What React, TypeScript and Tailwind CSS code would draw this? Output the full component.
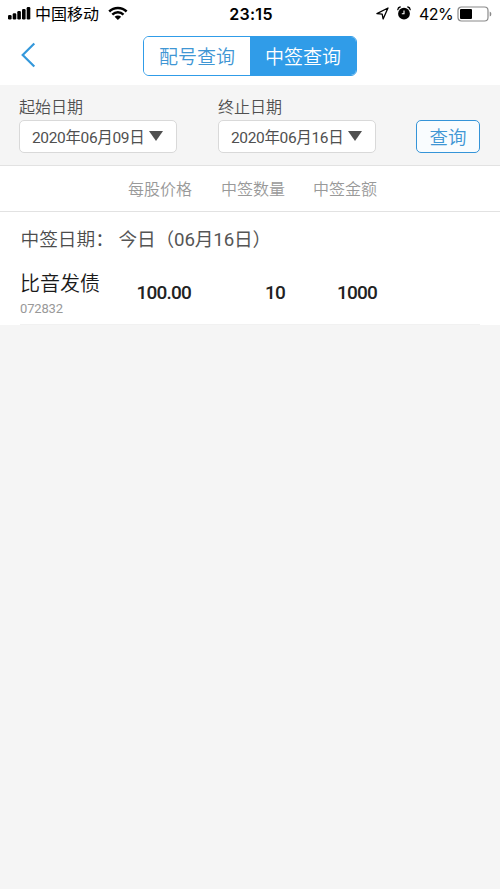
const TABS = ['配号查询', '中签查询'];

const RECORDS = [{ name: '比音发债', code: '072832', price: '100.00', count: '10', amount: '1000' }];

function StatusBar() {
  return (
    <div className="flex h-[27px] items-center pl-2 pr-[8px] text-black">
      <div className="flex flex-1 items-center">
        <svg width="23" height="14" viewBox="0 0 23 14" className="-mt-px shrink-0">
          <rect x="0" y="9" width="3.6" height="4.5" rx="1.2" />
          <rect x="4.7" y="7.2" width="3.6" height="6.3" rx="1.2" />
          <rect x="9.3" y="5" width="3.6" height="8.5" rx="1.2" />
          <rect x="14" y="3" width="3.6" height="10.5" rx="1.2" />
          <rect x="18.7" y="1" width="3.6" height="12.5" rx="1.2" />
        </svg>
        <span className="ml-1 mt-[2px] text-[16px] leading-none">中国移动</span>
        <svg width="20" height="15" viewBox="0 0 20 15" className="ml-[9px] shrink-0">
          <g fill="none" stroke="black" strokeWidth="2.5">
            <path d="M1.2 5.5C6.1.7 13.7.7 18.6 5.5" />
            <path d="M4.3 8.6C7.5 5.6 12.3 5.6 15.5 8.6" />
          </g>
          <path d="M6.6 10.8C8.5 9.2 11.3 9.2 13.2 10.8L9.9 14.1Z" />
        </svg>
      </div>
      <span className="ml-[2px] font-[Inter] text-[16px] font-semibold leading-none tracking-[0.3px]">23:15</span>
      <div className="flex flex-1 items-center justify-end">
        <svg width="13" height="13" viewBox="0 0 13 13" className="shrink-0">
          <path d="M.9 6.6L12 1L7.1 12L6.2 7.1Z" fill="none" stroke="black" strokeWidth="1.3" strokeLinejoin="round" />
        </svg>
        <svg width="14" height="14" viewBox="0 0 14 14" className="-mt-px ml-[8px] shrink-0">
          <circle cx="7" cy="7.7" r="5.9" />
          <path d="M.8 3.7Q1 1.5 3.2 1M13.2 3.7Q13 1.5 10.8 1" fill="none" stroke="black" strokeWidth="1.3" strokeLinecap="round" />
          <path d="M7 4.6V7.8H4.8" fill="none" stroke="white" strokeWidth="1.1" />
        </svg>
        <span className="ml-[8px] font-[Inter] text-[16px] leading-none tracking-[-0.6px]">42%</span>
        <svg width="35" height="16" viewBox="0 0 35 16" className="ml-1 shrink-0">
          <rect x="1" y="1" width="30" height="14" rx="3.5" fill="none" stroke="#8a8a8a" strokeWidth="1.2" />
          <rect x="3" y="3" width="12" height="10" rx="1" />
          <path d="M32.7 5.5Q34.4 6 34.4 8T32.7 10.5Z" fill="#8a8a8a" />
        </svg>
      </div>
    </div>
  );
}

function DateField({ label, value }: { label: string; value: string }) {
  return (
    <div className="w-[158px]">
      <div className="pt-px text-[16px] font-[350] leading-[22px] text-[#505050]">{label}</div>
      <div className="mt-px flex h-[33px] items-center rounded-[5px] border border-[#d9d9d9] bg-white pl-3 text-[#505050]">
        <span className="mt-[5px] whitespace-nowrap text-[15.5px] leading-none tracking-[-0.35px]">{value}</span>
        <svg width="14" height="10" viewBox="0 0 14 10" className="-mt-[2px] ml-[5px] shrink-0">
          <path d="M0 0H14L7 10Z" fill="#505050" />
        </svg>
      </div>
    </div>
  );
}

export default function App() {
  return (
    <div className="min-h-screen w-[500px] bg-[#f5f5f5] font-[Roboto,'Noto_Sans_CJK_SC',sans-serif]">
      <header className="h-[85px] bg-white">
        <StatusBar />
        <div className="flex pl-[21px] pt-[9px]">
          <svg width="15" height="26" viewBox="0 0 15 26" className="mt-[6px]">
            <path d="M13.3 1.5L1.7 13L13.3 24.5" fill="none" stroke="#3498db" strokeWidth="2.2" />
          </svg>
          <div className="ml-[107px] flex h-10 w-[214px] overflow-hidden rounded-[6px] border border-[#309ce8]">
            {TABS.map((tab, i) => (
              <button
                key={tab}
                className={`flex flex-1 items-center justify-center pt-[3px] text-[19px] font-[350] leading-none ${
                  i === 1 ? 'bg-[#309ce8] text-white' : 'bg-white text-[#3f96d4]'
                }`}
              >
                {tab}
              </button>
            ))}
          </div>
        </div>
      </header>

      {/* Date filter */}
      <section className="flex h-[81px] border-b border-[#e2e2e2] pl-[19px] pt-[11px]">
        <DateField label="起始日期" value="2020年06月09日" />
        <div className="ml-[41px]">
          <DateField label="终止日期" value="2020年06月16日" />
        </div>
        <button className="ml-10 mt-6 flex h-[33px] w-16 items-center justify-center rounded-[5px] border border-[#3594d8] bg-[#f9fcfe] pt-[3px] text-[18.5px] font-[350] leading-none text-[#3f96d4]">
          查询
        </button>
      </section>

      {/* Results */}
      <section className="bg-white">
        <div className="flex h-[46px] items-center border-b border-[#e2e2e2] pl-[127px] pt-[3px] text-[16px] font-[350] text-[#999]">
          <span className="w-[94px] pl-px">每股价格</span>
          <span className="w-[92px]">中签数量</span>
          <span>中签金额</span>
        </div>
        <div className="flex h-[56px] items-center pl-[20.5px] text-[18.7px] text-[#555]">
          <span className="w-[98px] whitespace-nowrap font-[350] text-[#4c4c4c]">中签日期：</span>
          <span className="tracking-[-0.15px]">今日（06月16日）</span>
        </div>
        {RECORDS.map((r) => (
          <div key={r.code} className="h-[57px] px-5 text-[#222]">
            <div className="flex h-full border-b border-[#f1f1f1]">
              <div className="w-[97px]">
                <div className="pt-px text-[20px] font-[350] leading-[30px] text-[#1a1a1a]">{r.name}</div>
                <div className="pt-px text-[13px] leading-[18px] tracking-[-0.15px] text-[#999]">{r.code}</div>
              </div>
              <div className="flex h-[50px] items-center text-right text-[19px] font-medium tracking-[-0.8px]">
                <span className="w-[74px]">{r.price}</span>
                <span className="w-[94px]">{r.count}</span>
                <span className="w-[92px]">{r.amount}</span>
              </div>
            </div>
          </div>
        ))}
      </section>
    </div>
  );
}
